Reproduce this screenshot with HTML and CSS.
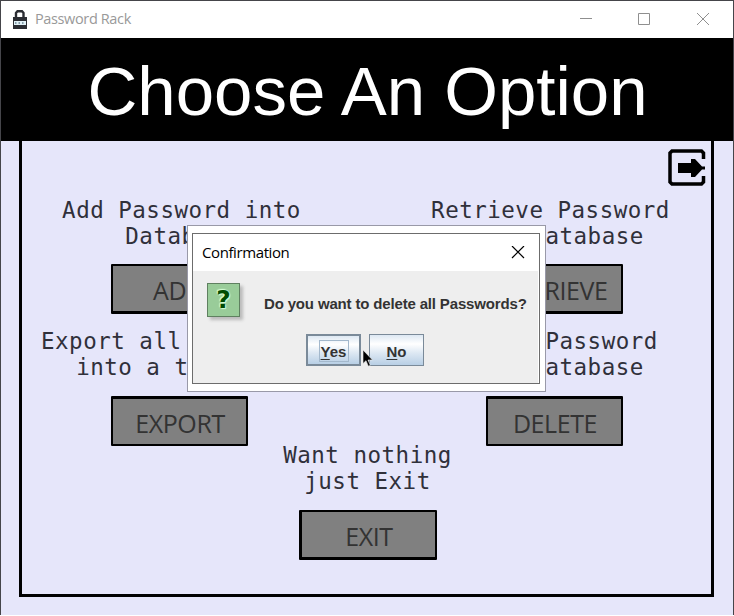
FILE: index.html
```html
<!DOCTYPE html>
<html lang="en">
<head>
<meta charset="utf-8">
<title>Password Rack</title>
<link rel="stylesheet" href="styles.css">
</head>
<body>
<div class="window">
  <header class="titlebar">
    <svg class="lock" width="16" height="21" viewBox="0 0 16 21">
      <path d="M4 8V4L5.500 2.300H10L11.500 4V8" fill="none" stroke="#2b2d33" stroke-width="2.400"/>
      <path d="M1 8H15V20H1Z" fill="#2b2d33"/>
      <path d="M2 12H14V16H2Z" fill="#e2f2f8"/>
      <path d="M3 14H13.500" stroke="#2b4a5c" stroke-width="1" stroke-dasharray="1.500 2"/>
    </svg>
    <span class="app-name">Password Rack</span>
    <svg class="controls" width="130" height="14" viewBox="0 0 130 14" fill="none" stroke="#8f8f8f">
      <path d="M0 5.500H12M58.500 0.500H69.500V11.500H58.500Z"/>
      <path d="M117 0L129 12M129 0L117 12"/>
    </svg>
  </header>
  <h1 class="banner">Choose An Option</h1>
  <main class="content">
    <section class="frame">
      <div class="tools">
        <svg width="38" height="38" viewBox="0 0 38 38">
          <path d="M35.500 10V4L33.500 2H4L2 4V33L4 35H33.500L35.500 33V27" fill="none" stroke="#000" stroke-width="3.500"/>
          <path d="M10 14H23V10H27L34 17.500H37V20.500H34L27 28H23V24H10Z" fill="#000"/>
        </svg>
      </div>
      <div class="options">
        <div class="option">
          <p class="caption">Add Password into<br>Database</p>
          <button class="action add">ADD</button>
        </div>
        <div class="option right">
          <p class="caption">Retrieve Password<br><span class="from">from Database</span></p>
          <button class="action">RETRIEVE</button>
        </div>
        <div class="option lower">
          <p class="caption">Export all Passwords<br>into a txt file</p>
          <button class="action">EXPORT</button>
        </div>
        <div class="option right lower">
          <p class="caption">Delete Password<br>from Database</p>
          <button class="action">DELETE</button>
        </div>
      </div>
      <div class="option leave">
        <p class="caption">Want nothing<br>just Exit</p>
        <button class="action">EXIT</button>
      </div>
    </section>
  </main>
</div>

<div class="dialog-shell">
  <div class="dialog">
    <div class="dialog-title">
      <span>Confirmation</span>
      <svg width="14" height="14" viewBox="0 0 14 14"><path d="M1 0L13 12M13 0L1 12" stroke="#000" stroke-width="1.200"/></svg>
    </div>
    <div class="dialog-body">
      <div class="message">
        <div class="question">?</div>
        <span class="prompt">Do you want to delete all Passwords?</span>
      </div>
      <div class="buttons">
        <button class="choice focused"><span class="ring"><u>Y</u>es</span></button>
        <button class="choice"><u>N</u>o</button>
      </div>
    </div>
  </div>
</div>
<svg class="cursor" width="12" height="19" viewBox="0 0 12 19"><path d="M1 1V14.500L4 11.700L6.300 17.200L8.300 16.300L6 11H10.500Z" fill="#000" stroke="#eee" stroke-width=".6"/></svg>
</body>
</html>
```
FILE: styles.css
```css
* { box-sizing: border-box; }
body { margin: 0; width: 734px; height: 616px; overflow: hidden; position: relative; background: #fff; }
.window {
  height: 615px;
  border: 1px solid #45454a;
  border-bottom: 0;
  display: flex;
  flex-direction: column;
}
.titlebar { height: 37px; flex: none; display: flex; align-items: center; padding: 0 23px 0 11px; background: #fff; }
.app-name { margin: -1px 0 0 7px; font: 14.5px/20px "Open Sans", sans-serif; letter-spacing: -0.37px; color: #999; }
.controls { margin-left: auto; }
.banner {
  margin: 0; height: 103px; flex: none; padding-left: 1px;
  background: #000; color: #fff; text-align: center;
  font: 400 69px/108px "Liberation Sans", sans-serif;
  white-space: nowrap;
}
.content { flex: 1; background: #e6e6fa; padding: 0 19px 18px 18px; }
.frame { height: 456px; border: 3px solid #000; border-top: 0; }
.tools { height: 56px; padding: 8px 5px 0 0; display: flex; justify-content: flex-end; }
.options { display: grid; grid-template-columns: 315px 315px; column-gap: 60px; row-gap: 14px; }
.option { display: flex; flex-direction: column; align-items: center; height: 117px; }
.caption {
  margin: 0 0 15px; text-align: center; white-space: nowrap;
  font: 22.5px/26px "DejaVu Sans Mono", monospace;
  letter-spacing: 0.5px; color: #30303a;
  padding-left: 4px;
}
.right .caption { padding: 0 8px 0 0; }
.right.lower .caption { padding-right: 4px; }
.from { padding-left: 4px; }
.lower .caption { margin-bottom: 16px; }
.action {
  width: 137px; height: 50px; flex: none; padding: 3px 0 0 1px;
  border: 2px solid #000; border-bottom-width: 3px; border-radius: 1px;
  background: #808080; color: #333;
  font: 25px/40px "Open Sans", sans-serif; letter-spacing: -0.4px;
}
.lower .action { border-width: 3px 2px 2px; }
.action.add { padding-right: 3px; }
.leave { margin-top: -3px; padding-left: 3px; }
.leave .caption { margin-bottom: 16px; padding: 0 1px 0 0; }
.leave .action { width: 138px; border-left-width: 3px; }
.dialog-shell { position: absolute; left: 187px; top: 225px; width: 359px; height: 167px; padding: 7px 5px 7px 4px; border: 1px solid #9999a8; background: #fff; }
.dialog { height: 151px; border: 1px solid #6c6c6c; background: #fff; padding-right: 1px; }
.dialog-title { height: 37px; display: flex; align-items: center; justify-content: space-between; padding: 0 13px 0 9px; font: 15px/20px "Open Sans", sans-serif; letter-spacing: -0.4px; color: #000; }
.dialog-title span { margin-top: -2px; }
.dialog-body { height: 112px; background: #eee; padding: 12px 12px 0 14px; }
.message { display: flex; align-items: center; height: 38px; }
.question {
  flex: none; width: 33px; height: 34px; margin: -4px 24px 0 0;
  border: 1px solid #5f8060; background: #99cc99; box-shadow: 3px 3px 3px #bbb;
  color: #004c00; text-align: center; font: 700 25px/32px "DejaVu Sans", sans-serif;
  text-shadow: 0 0 2px #e0ffe0, 1px 1px 1px #d0ffd0, -1px -1px 1px #d0ffd0;
}
.prompt { margin-top: 4px; font: 700 15px/20px "Liberation Sans", sans-serif; letter-spacing: -0.16px; color: #333; white-space: nowrap; }
.buttons { display: flex; justify-content: center; gap: 8px; margin-top: 13px; padding-right: 4px; }
.choice {
  width: 55px; height: 32px; padding: 4px 0 0 1px; border: 1px solid #7a8a99;
  background: linear-gradient(#dde8f3, #fff 30%, #dde8f3 60%, #b8cfe5);
  font: 700 15px/20px "Liberation Sans", sans-serif; color: #333;
}
.choice u { text-underline-offset: 2px; text-decoration-thickness: 1px; text-decoration-skip-ink: none; }
.focused { border: 2px solid #7a8a99; }
.ring { display: block; width: 30px; height: 22px; margin: -3px auto 0; border: 1px solid #a3b8cc; line-height: 22px; }
.cursor { position: absolute; left: 362px; top: 349px; }
```
